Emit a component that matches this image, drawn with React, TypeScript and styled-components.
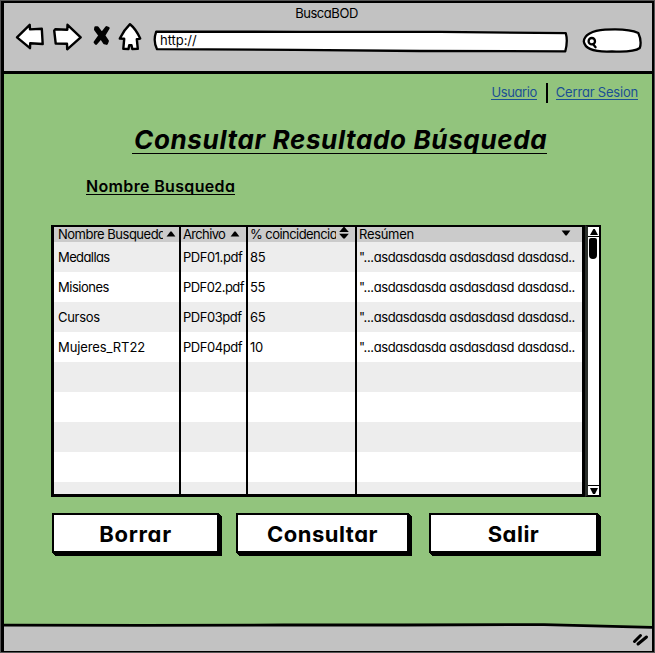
import React from "react";
import styled, { createGlobalStyle } from "styled-components";

const GlobalStyle = createGlobalStyle`
  * { box-sizing: border-box; }
  body { margin: 0; background: #fff; }
`;

const Window = styled.div`
  width: 655px;
  height: 653px;
  display: flex;
  flex-direction: column;
  border: solid #000;
  border-width: 3px 3px 2px 4px;
  outline: 1px solid #555;
  outline-offset: -1px;
  background: #92c47d;
  overflow: hidden;
  color: #000;
  font-family: Inter, "Liberation Sans", sans-serif;
  font-size: 13px;
  font-feature-settings: "cv11" 1, "calt" 0;
`;

const Chrome = styled.header`
  height: 71px;
  flex: none;
  background: #c2c2c2;
  border-bottom: 3px solid #000;
`;

const WindowTitle = styled.div`
  height: 20px;
  line-height: 20px;
  text-align: center;
  letter-spacing: -0.45px;
  padding-right: 3px;
`;

const NavRow = styled.div`
  display: flex;
  height: 32px;
  padding-left: 10px;
`;

const NavIcon = styled.svg<{ $gap: number }>`
  display: block;
  flex: none;
  margin-right: ${(p) => p.$gap}px;
  overflow: visible;
  fill: #fff;
  stroke: #000;
  stroke-width: 2.4;
  stroke-linejoin: round;
  stroke-linecap: round;
`;

const Field = styled.div<{ $width: number }>`
  position: relative;
  width: ${(p) => p.$width}px;
  height: 32px;
  flex: none;
`;

const FieldOutline = styled.svg`
  position: absolute;
  inset: 0;
  fill: #fff;
  stroke: #000;
  stroke-width: 2.3;
  stroke-linejoin: round;
`;

const Address = styled.span`
  position: relative;
  display: block;
  padding-left: 7px;
  line-height: 35px;
  letter-spacing: -0.05px;
`;

const Content = styled.main`
  flex: 1;
  padding-left: 47px;
  display: flex;
  flex-direction: column;
`;

const Account = styled.nav`
  display: flex;
  justify-content: flex-end;
  align-items: center;
  height: 20px;
  margin-top: 9px;
  padding-right: 14px;
`;

const AccountLink = styled.a<{ $spacing: number }>`
  height: 14px;
  color: #1a4f94;
  line-height: 13px;
  border-bottom: 1px solid #1a4f94;
  letter-spacing: ${(p) => p.$spacing}px;
`;

const Divider = styled.i`
  width: 2px;
  height: 20px;
  margin: 0 8px 0 9px;
  background: #000;
`;

const Title = styled.h1`
  width: 415px;
  height: 30px;
  margin: 21px 0 0 81px;
  padding-left: 2px;
  border-bottom: 1px solid #000;
  font-size: 26px;
  font-style: italic;
  font-weight: 700;
  line-height: 32px;
  letter-spacing: 0.65px;
  white-space: nowrap;
`;

const Subtitle = styled.h2`
  width: 149px;
  height: 18px;
  margin: 23px 0 0 35px;
  border-bottom: 1px solid #000;
  font-size: 16px;
  font-weight: 600;
  line-height: 18px;
  letter-spacing: 0.34px;
  white-space: nowrap;
`;

const TableArea = styled.section`
  display: flex;
  height: 272px;
  margin-top: 30px;
`;

const Grid = styled.div`
  display: grid;
  grid-template-columns: 127px 67px 109px 225px;
  width: 534px;
  border: solid #000;
  border-width: 2px 3px 3px;
  background: #fff;
`;

const Column = styled.div<{ $pad: number; $last?: boolean }>`
  overflow: hidden;
  border-right: ${(p) => (p.$last ? "0" : "2px solid #000")};
  background: repeating-linear-gradient(#ededed 0 30px, #fff 30px 60px) 0 15px;
  min-width: 0;
  --pad: ${(p) => p.$pad}px;
`;

const HeadCell = styled.div`
  display: flex;
  gap: 3px;
  height: 15px;
  padding-left: var(--pad);
  background: #cbcbcb;
  line-height: 15px;
`;

const HeadLabel = styled.span<{ $width: number; $spacing: number }>`
  width: ${(p) => p.$width}px;
  overflow: hidden;
  white-space: nowrap;
  letter-spacing: ${(p) => p.$spacing}px;
`;

const SortIcon = styled.svg`
  display: block;
  flex: none;
`;

const Cell = styled.div<{ $spacing: number }>`
  height: 30px;
  padding-left: var(--pad);
  line-height: 30px;
  white-space: nowrap;
  letter-spacing: ${(p) => p.$spacing}px;
`;

const ScrollBar = styled.div`
  width: 16px;
  display: flex;
  flex-direction: column;
  border: 2px solid #000;
  border-left: 3px solid #2b2f2b;
  background: #fff;
`;

const ScrollButton = styled.div<{ $down?: boolean }>`
  display: flex;
  justify-content: center;
  align-items: center;
  height: 10px;
  ${(p) => (p.$down ? "border-top: 1px solid #000; margin-top: auto;" : "border-bottom: 1px solid #000;")}
`;

const Thumb = styled.div`
  width: 8px;
  height: 21px;
  margin: 1px 0 0 1px;
  border-radius: 2px 2px 4px 4px;
  background: #000;
`;

const Actions = styled.div`
  display: grid;
  grid-template-columns: 184px 193px 169px;
  margin: 16px 0 0 1px;
`;

const Button = styled.button<{ $width: number; $spacing: number }>`
  width: ${(p) => p.$width}px;
  height: 40px;
  padding: 2px 0 0;
  border: 2px solid #000;
  background: #fff;
  box-shadow: 1px 1px 0 #000, 2px 2px 0 #000, 3px 3px 0 #000;
  color: #000;
  font-family: inherit;
  font-feature-settings: inherit;
  font-size: 22px;
  font-weight: 700;
  line-height: 34px;
  letter-spacing: ${(p) => p.$spacing}px;
`;

const StatusBar = styled.footer`
  position: relative;
  height: 26px;
  flex: none;
  background: #c2c2c2;
`;

const StatusEdge = styled.svg`
  position: absolute;
  left: 0;
  top: -3px;
`;

const ResizeGrip = styled.svg`
  position: absolute;
  right: 2px;
  top: 6px;
`;

type Sort = "up" | "down" | "both";

function Sorter({ kind }: { kind: Sort }) {
  return (
    <SortIcon width="10" height="15" viewBox="0 0 10 15">
      {kind === "up" && <path d="M4.4 4.6h1.2L9.4 9.4H.6Z" />}
      {kind === "down" && <path d="M.6 3.5h8.8L5.7 8.4H4.5Z" />}
      {kind === "both" && (
        <>
          <path d="M4.5 0h1L9.8 5H.2Z" />
          <path d="M.2 6.8h9.6l-4 4.8H4.3Z" />
        </>
      )}
    </SortIcon>
  );
}

interface ColumnData {
  label: string;
  labelWidth: number;
  labelSpacing: number;
  pad: number;
  sort: Sort;
  cells: [text: string, spacing: number][];
}

const summary: [string, number] = ['"...asdasdasda asdasdasd dasdasd..', -0.39];

const columns: ColumnData[] = [
  {
    label: "Nombre Busqueda",
    labelWidth: 105,
    labelSpacing: -0.5,
    pad: 4,
    sort: "up",
    cells: [
      ["Medallas", -0.6],
      ["Misiones", -0.5],
      ["Cursos", -0.3],
      ["Mujeres_RT22", -0.1],
    ],
  },
  {
    label: "Archivo",
    labelWidth: 44,
    labelSpacing: -0.65,
    pad: 2,
    sort: "up",
    cells: [
      ["PDF01.pdf", -0.45],
      ["PDF02.pdf", -0.55],
      ["PDF03pdf", -0.45],
      ["PDF04pdf", -0.45],
    ],
  },
  {
    label: "% coincidencia",
    labelWidth: 86,
    labelSpacing: -0.55,
    pad: 2,
    sort: "both",
    cells: [
      ["85", -0.3],
      ["55", -0.3],
      ["65", -0.3],
      ["10", -0.3],
    ],
  },
  {
    label: "Resúmen",
    labelWidth: 199,
    labelSpacing: -0.3,
    pad: 2,
    sort: "down",
    cells: [summary, summary, summary, summary],
  },
];

export default function App() {
  return (
    <>
      <GlobalStyle />
      <Window>
        <Chrome>
          <WindowTitle>BuscaBOD</WindowTitle>
          <NavRow>
            <NavIcon $gap={7} width="31" height="32" viewBox="14 23 31 32">
              <path d="M17 37.3 29.7 24.8 30 29.4 41.8 28.8 42.7 44 30.2 43.3 30 48.2Z" />
            </NavIcon>
            <NavIcon $gap={8} width="31" height="32" viewBox="52 23 31 32">
              <path d="M54.2 30.5 55.5 29.2 67.3 29.7 67.5 24.8 80.7 37.3 67.2 49.3 67 43.8 55.7 43.5Z" />
            </NavIcon>
            <NavIcon $gap={7} width="20" height="32" viewBox="91 23 20 32">
              <path
                d="M95.5 27.5 97.5 27.5 101.8 33.2 106.5 27.3 108.5 28.2 104 35.5 107.7 41 106.7 43.7 104.3 43 101 38 96 43.7 94.8 42.2 99.6 35.5 95.2 29.5Z"
                fill="#000"
              />
            </NavIcon>
            <NavIcon $gap={11} width="24" height="32" viewBox="118 23 24 32">
              <path d="M130 24.2 Q136 29 140.2 38.5L136.8 39.2 137.8 48.8 132.3 49 131.5 45.3 129.2 45.2 128.5 49 123.3 48.8 124.2 38.8 119.8 38.5Q124 30 130 24.2Z" />
            </NavIcon>
            <Field $width={417}>
              <FieldOutline width="417" height="32" viewBox="153 23 417 32">
                <path d="M156.2 31.7 300 31.8 440 31.8 565.8 33.2Q568 41 565.3 51.3L420 51 295 49.8 157 49.2Q152.8 41 156.2 31.7Z" />
              </FieldOutline>
              <Address>http://</Address>
            </Field>
            <Field $width={72}>
              <FieldOutline width="72" height="32" viewBox="570 23 72 32">
                <path d="M583.8 41.5C584 35 592 30.5 605 29.7C620 28.8 632 30 638.3 33Q642 41 639.8 48C635 51.5 622 51.9 612 51.4C595 52.2 585 49.5 583.8 41.5Z" />
                <circle cx="591.8" cy="41.2" r="3.2" />
                <path d="m593.4 44.5 2.2 2.7" strokeLinecap="round" />
              </FieldOutline>
            </Field>
          </NavRow>
        </Chrome>

        <Content>
          <Account>
            <AccountLink $spacing={-0.4}>Usuario</AccountLink>
            <Divider />
            <AccountLink $spacing={-0.2}>Cerrar Sesion</AccountLink>
          </Account>
          <Title>Consultar Resultado Búsqueda</Title>
          <Subtitle>Nombre Busqueda</Subtitle>

          <TableArea>
            <Grid>
              {columns.map((col, i) => (
                <Column key={col.label} $pad={col.pad} $last={i === columns.length - 1}>
                  <HeadCell>
                    <HeadLabel $width={col.labelWidth} $spacing={col.labelSpacing}>
                      {col.label}
                    </HeadLabel>
                    <Sorter kind={col.sort} />
                  </HeadCell>
                  {col.cells.map(([text, spacing], row) => (
                    <Cell key={row} $spacing={spacing}>
                      {text}
                    </Cell>
                  ))}
                </Column>
              ))}
            </Grid>
            <ScrollBar>
              <ScrollButton>
                <svg width="8" height="6" viewBox="0 0 8 6">
                  <path d="M3.4 0h1.4L8 6H0Z" />
                </svg>
              </ScrollButton>
              <Thumb />
              <ScrollButton $down>
                <svg width="8" height="6" viewBox="0 0 8 6">
                  <path d="M0 0h8L5 6H3Z" />
                </svg>
              </ScrollButton>
            </ScrollBar>
          </TableArea>

          <Actions>
            <Button $width={167} $spacing={0.7}>Borrar</Button>
            <Button $width={173} $spacing={0.5}>Consultar</Button>
            <Button $width={169} $spacing={0.5}>Salir</Button>
          </Actions>
        </Content>

        <StatusBar>
          <StatusEdge width="648" height="8" viewBox="0 0 648 8">
            <path d="M0 0H560L648 3V5H0Z" fill="#92c47d" />
            <path d="M0 2V5H648V5L540 2Z" fill="#c2c2c2" />
            <path d="M0 3.2 140 3.4 280 3 400 3 540 2.6 648 5.4" fill="none" stroke="#000" strokeWidth="2.8" />
          </StatusEdge>
          <ResizeGrip width="19" height="16" viewBox="0 0 19 16">
            <path d="M3.5 10.5 9.5 4.5M7 13 15.5 6" stroke="#000" strokeWidth="3" strokeLinecap="round" />
          </ResizeGrip>
        </StatusBar>
      </Window>
    </>
  );
}
